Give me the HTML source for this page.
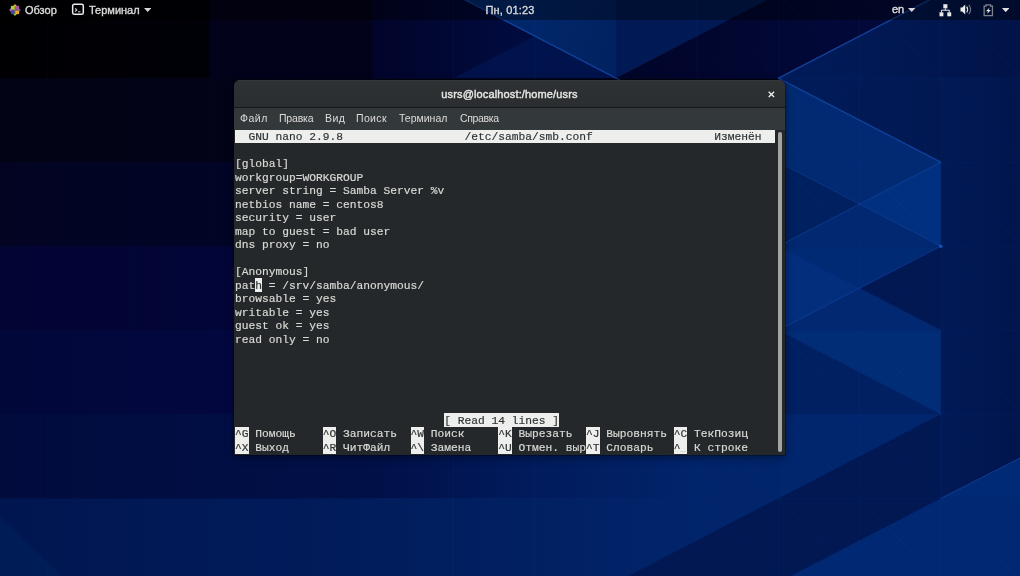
<!DOCTYPE html>
<html><head><meta charset="utf-8"><title>desktop</title>
<style>
html,body{margin:0;padding:0;}
body{width:1020px;height:576px;overflow:hidden;background:#020a3a;position:relative;font-family:"Liberation Sans",sans-serif;}
.wall{position:absolute;left:0;top:0;}
.topbar{position:absolute;left:0;top:0;width:1020px;height:20px;background:rgba(0,0,0,0.38);}
.tb{will-change:transform;position:absolute;top:0;height:20px;line-height:20px;color:#dadada;font-size:11px;font-weight:normal;-webkit-text-stroke:0.35px #dadada;white-space:nowrap;}
.win{position:absolute;left:234px;top:80px;width:551px;height:374.5px;background:#25282a;border-radius:6px 6px 0 0;box-shadow:0 2px 8px rgba(0,0,0,0.45),0 0 0 1px rgba(0,0,0,0.25);overflow:hidden;}
.title{position:absolute;left:0;top:0;width:551px;height:27px;background:linear-gradient(#30343688,#2b2e30);background-color:#2c2f31;border-bottom:1px solid #151718;box-shadow:inset 0 1px 0 rgba(255,255,255,0.035);}
.title .t{will-change:transform;position:absolute;left:0;width:551px;top:0;height:27px;line-height:28px;text-align:center;color:#e6e6e4;font-size:11px;font-weight:normal;-webkit-text-stroke:0.4px #e6e6e4;letter-spacing:0.14px;}
.menu{position:absolute;left:0;top:28px;width:551px;height:22px;background:#33383a;}
.menu span{will-change:transform;position:absolute;top:0;height:22px;line-height:21px;color:#dcdcda;font-size:10.5px;white-space:nowrap;}
.term{position:absolute;left:1px;top:49.75px;width:540px;height:324px;font-family:"Liberation Mono",monospace;font-size:11.25px;color:#d8dad5;-webkit-text-stroke:0.18px currentColor;}
.r{position:absolute;height:13.5px;line-height:13.5px;white-space:pre;}
.r.i{color:#2e3436;}
.r.u{color:#c9c9c6;}
.b{position:absolute;height:13.5px;background:#eeeeec;}
.tx{position:absolute;left:0;top:0;width:540px;height:324px;will-change:transform;}
.ga{will-change:transform;}
.sb{position:absolute;left:544.2px;top:51.8px;width:3.8px;height:320.2px;background:#a4a5a3;border-radius:2px;}
</style></head><body>
<svg class="wall" width="1020" height="576" viewBox="0 0 1020 576">
<defs><linearGradient id="g0" gradientUnits="userSpaceOnUse" x1="0" y1="0" x2="560" y2="0"><stop offset="0" stop-color="#000003"/><stop offset="1" stop-color="#010110"/></linearGradient><linearGradient id="g1" gradientUnits="userSpaceOnUse" x1="0" y1="0" x2="560" y2="0"><stop offset="0" stop-color="#020314"/><stop offset="1" stop-color="#02041c"/></linearGradient><linearGradient id="g2" gradientUnits="userSpaceOnUse" x1="0" y1="0" x2="560" y2="0"><stop offset="0" stop-color="#020422"/><stop offset="1" stop-color="#02052c"/></linearGradient><linearGradient id="g3" gradientUnits="userSpaceOnUse" x1="0" y1="0" x2="560" y2="0"><stop offset="0" stop-color="#020434"/><stop offset="1" stop-color="#02063c"/></linearGradient><linearGradient id="g4" gradientUnits="userSpaceOnUse" x1="0" y1="0" x2="560" y2="0"><stop offset="0" stop-color="#02073a"/><stop offset="1" stop-color="#020a46"/></linearGradient><linearGradient id="g5" gradientUnits="userSpaceOnUse" x1="0" y1="0" x2="560" y2="0"><stop offset="0" stop-color="#010b3c"/><stop offset="1" stop-color="#011350"/></linearGradient><linearGradient id="g6" gradientUnits="userSpaceOnUse" x1="0" y1="0" x2="560" y2="0"><stop offset="0" stop-color="#011650"/><stop offset="1" stop-color="#012064"/></linearGradient><linearGradient id="g7" gradientUnits="userSpaceOnUse" x1="372.4" y1="0" x2="616.0" y2="0"><stop offset="0" stop-color="#02042a"/><stop offset="0.6" stop-color="#010b3e"/><stop offset="1" stop-color="#01104a"/></linearGradient><linearGradient id="g8" gradientUnits="userSpaceOnUse" x1="453.59999999999997" y1="-5.950000000000003" x2="616.0" y2="30"><stop offset="0" stop-color="#022d74"/><stop offset="0.5" stop-color="#01276a"/><stop offset="1" stop-color="#012260"/></linearGradient><linearGradient id="g9" gradientUnits="userSpaceOnUse" x1="640" y1="0" x2="900" y2="0"><stop offset="0" stop-color="#02052a"/><stop offset="1" stop-color="#020a3c"/></linearGradient><linearGradient id="g10" gradientUnits="userSpaceOnUse" x1="820" y1="0" x2="1020" y2="0"><stop offset="0" stop-color="#011b58"/><stop offset="1" stop-color="#011348"/></linearGradient><linearGradient id="g11" gradientUnits="userSpaceOnUse" x1="210.0" y1="0" x2="697.1999999999999" y2="0"><stop offset="0" stop-color="#010e44"/><stop offset="0.35" stop-color="#011048"/><stop offset="0.62" stop-color="#011a5a"/><stop offset="1" stop-color="#01246a"/></linearGradient><linearGradient id="g12" gradientUnits="userSpaceOnUse" x1="291.19999999999993" y1="0" x2="697.1999999999999" y2="0"><stop offset="0" stop-color="#011b58"/><stop offset="1" stop-color="#01246a"/></linearGradient><linearGradient id="g13" gradientUnits="userSpaceOnUse" x1="940.8" y1="0" x2="1020" y2="0"><stop offset="0" stop-color="#011a56"/><stop offset="1" stop-color="#01154c"/></linearGradient><linearGradient id="g14" gradientUnits="userSpaceOnUse" x1="778.4" y1="78.1" x2="940.8" y2="78.1"><stop offset="0" stop-color="#011c5a"/><stop offset="1" stop-color="#011852"/></linearGradient></defs>
<polygon points="0.0,-6.0 1020.0,-6.0 1020.0,78.4 0.0,78.4" fill="url(#g0)"/>
<polygon points="0.0,78.1 1020.0,78.1 1020.0,162.4 0.0,162.4" fill="url(#g1)"/>
<polygon points="0.0,162.1 1020.0,162.1 1020.0,246.5 0.0,246.5" fill="url(#g2)"/>
<polygon points="0.0,246.2 1020.0,246.2 1020.0,330.6 0.0,330.6" fill="url(#g3)"/>
<polygon points="0.0,330.2 1020.0,330.2 1020.0,414.6 0.0,414.6" fill="url(#g4)"/>
<polygon points="0.0,414.3 1020.0,414.3 1020.0,498.7 0.0,498.7" fill="url(#g5)"/>
<polygon points="0.0,498.4 1020.0,498.4 1020.0,582.7 0.0,582.7" fill="url(#g6)"/>
<polygon points="210.0,-6.0 372.4,-6.0 372.4,78.1 210.0,78.1" fill="#02021a"/>
<polygon points="372.4,-6.0 616.0,-6.0 616.0,78.1 372.4,78.1" fill="url(#g7)"/>
<polygon points="453.6,78.1 534.8,36.1 616.0,78.1" fill="#01144e" fill-opacity="0.9"/>
<polygon points="453.6,-6.0 616.0,78.1 616.0,-6.0" fill="url(#g8)"/>
<polygon points="616.0,-6.0 616.0,78.1 778.4,-6.0" fill="#011a56"/>
<polygon points="616.0,78.1 778.4,78.1 940.8,-6.0 778.4,-6.0" fill="url(#g9)"/>
<polygon points="778.4,78.1 940.8,-6.0 1020.0,-6.0 1020.0,78.1" fill="url(#g10)"/>
<polygon points="210.0,414.3 778.4,414.3 778.4,498.4 210.0,498.4" fill="url(#g11)"/>
<polygon points="291.2,498.4 778.4,498.4 778.4,582.4 291.2,582.4" fill="url(#g12)"/>
<polygon points="0.0,516.4 0.0,576.0 62.0,576.0" fill="#012a66" fill-opacity="0.3"/>
<polygon points="940.8,78.1 1020.0,78.1 1020.0,498.4 940.8,498.4" fill="url(#g13)"/>
<polygon points="778.4,78.1 940.8,78.1 940.8,162.1" fill="url(#g14)"/>
<polygon points="778.4,78.1 940.8,162.1 778.4,162.1" fill="#012a72"/>
<polygon points="778.4,162.1 940.8,162.1 859.6,204.2" fill="#012a72"/>
<polygon points="778.4,162.1 778.4,246.2 859.6,204.2" fill="#012060"/>
<polygon points="940.8,162.1 940.8,246.2 859.6,204.2" fill="#023080"/>
<polygon points="778.4,246.2 940.8,246.2 859.6,204.2" fill="#012870"/>
<polygon points="778.4,246.2 940.8,246.2 859.6,288.2" fill="#012a74"/>
<polygon points="778.4,246.2 778.4,330.2 859.6,288.2" fill="#022e7c"/>
<polygon points="940.8,246.2 940.8,330.2 859.6,288.2" fill="#011852"/>
<polygon points="778.4,330.2 940.8,330.2 859.6,288.2" fill="#012870"/>
<polygon points="778.4,330.2 940.8,330.2 940.8,414.3" fill="#012c76"/>
<polygon points="778.4,330.2 940.8,414.3 778.4,414.3" fill="#012062"/>
<polygon points="778.4,414.3 940.8,414.3 940.8,498.4 778.4,498.4" fill="#01266e"/>
<polygon points="616.0,582.4 778.4,498.4 940.8,414.3 940.8,498.4 778.4,582.4" fill="#011852"/>
<polygon points="940.8,498.4 778.4,582.4 1020.0,582.4 1020.0,498.4" fill="#012872"/>
<polygon points="940.8,498.4 1020.0,458.0 1020.0,498.4" fill="#012a76"/>
<line x1="47.6" y1="0.0" x2="47.6" y2="576.0" stroke="#2a6ad8" stroke-opacity="0.05" stroke-width="0.7"/>
<line x1="128.8" y1="0.0" x2="128.8" y2="576.0" stroke="#2a6ad8" stroke-opacity="0.05" stroke-width="0.7"/>
<line x1="210.0" y1="0.0" x2="210.0" y2="576.0" stroke="#2a6ad8" stroke-opacity="0.05" stroke-width="0.7"/>
<line x1="291.2" y1="0.0" x2="291.2" y2="576.0" stroke="#2a6ad8" stroke-opacity="0.05" stroke-width="0.7"/>
<line x1="372.4" y1="0.0" x2="372.4" y2="576.0" stroke="#2a6ad8" stroke-opacity="0.05" stroke-width="0.7"/>
<line x1="453.6" y1="0.0" x2="453.6" y2="576.0" stroke="#2a6ad8" stroke-opacity="0.1" stroke-width="0.7"/>
<line x1="534.8" y1="0.0" x2="534.8" y2="576.0" stroke="#2a6ad8" stroke-opacity="0.1" stroke-width="0.7"/>
<line x1="616.0" y1="0.0" x2="616.0" y2="576.0" stroke="#2a6ad8" stroke-opacity="0.1" stroke-width="0.7"/>
<line x1="697.2" y1="0.0" x2="697.2" y2="576.0" stroke="#2a6ad8" stroke-opacity="0.1" stroke-width="0.7"/>
<line x1="778.4" y1="0.0" x2="778.4" y2="576.0" stroke="#2a6ad8" stroke-opacity="0.1" stroke-width="0.7"/>
<line x1="859.6" y1="0.0" x2="859.6" y2="576.0" stroke="#2a6ad8" stroke-opacity="0.1" stroke-width="0.7"/>
<line x1="940.8" y1="0.0" x2="940.8" y2="576.0" stroke="#2a6ad8" stroke-opacity="0.1" stroke-width="0.7"/>
<line x1="1022.0" y1="0.0" x2="1022.0" y2="576.0" stroke="#2a6ad8" stroke-opacity="0.1" stroke-width="0.7"/>
<line x1="372.4" y1="78.1" x2="1020.0" y2="78.1" stroke="#2a6ad8" stroke-opacity="0.1" stroke-width="0.7"/>
<line x1="372.4" y1="162.1" x2="1020.0" y2="162.1" stroke="#2a6ad8" stroke-opacity="0.1" stroke-width="0.7"/>
<line x1="372.4" y1="246.2" x2="1020.0" y2="246.2" stroke="#2a6ad8" stroke-opacity="0.1" stroke-width="0.7"/>
<line x1="372.4" y1="330.2" x2="1020.0" y2="330.2" stroke="#2a6ad8" stroke-opacity="0.1" stroke-width="0.7"/>
<line x1="372.4" y1="414.3" x2="1020.0" y2="414.3" stroke="#2a6ad8" stroke-opacity="0.1" stroke-width="0.7"/>
<line x1="372.4" y1="498.4" x2="1020.0" y2="498.4" stroke="#2a6ad8" stroke-opacity="0.1" stroke-width="0.7"/>
<line x1="372.4" y1="582.4" x2="1020.0" y2="582.4" stroke="#2a6ad8" stroke-opacity="0.1" stroke-width="0.7"/>
<line x1="697.2" y1="-6.0" x2="778.4" y2="78.1" stroke="#2a6ad8" stroke-opacity="0.09" stroke-width="0.7"/>
<line x1="778.4" y1="-6.0" x2="697.2" y2="78.1" stroke="#2a6ad8" stroke-opacity="0.06" stroke-width="0.7"/>
<line x1="778.4" y1="-6.0" x2="859.6" y2="78.1" stroke="#2a6ad8" stroke-opacity="0.09" stroke-width="0.7"/>
<line x1="859.6" y1="-6.0" x2="778.4" y2="78.1" stroke="#2a6ad8" stroke-opacity="0.06" stroke-width="0.7"/>
<line x1="859.6" y1="-6.0" x2="940.8" y2="78.1" stroke="#2a6ad8" stroke-opacity="0.09" stroke-width="0.7"/>
<line x1="940.8" y1="-6.0" x2="859.6" y2="78.1" stroke="#2a6ad8" stroke-opacity="0.06" stroke-width="0.7"/>
<line x1="940.8" y1="-6.0" x2="1022.0" y2="78.1" stroke="#2a6ad8" stroke-opacity="0.09" stroke-width="0.7"/>
<line x1="1022.0" y1="-6.0" x2="940.8" y2="78.1" stroke="#2a6ad8" stroke-opacity="0.06" stroke-width="0.7"/>
<line x1="697.2" y1="78.1" x2="778.4" y2="162.1" stroke="#2a6ad8" stroke-opacity="0.09" stroke-width="0.7"/>
<line x1="778.4" y1="78.1" x2="697.2" y2="162.1" stroke="#2a6ad8" stroke-opacity="0.06" stroke-width="0.7"/>
<line x1="778.4" y1="78.1" x2="859.6" y2="162.1" stroke="#2a6ad8" stroke-opacity="0.09" stroke-width="0.7"/>
<line x1="859.6" y1="78.1" x2="778.4" y2="162.1" stroke="#2a6ad8" stroke-opacity="0.06" stroke-width="0.7"/>
<line x1="859.6" y1="78.1" x2="940.8" y2="162.1" stroke="#2a6ad8" stroke-opacity="0.09" stroke-width="0.7"/>
<line x1="940.8" y1="78.1" x2="859.6" y2="162.1" stroke="#2a6ad8" stroke-opacity="0.06" stroke-width="0.7"/>
<line x1="940.8" y1="78.1" x2="1022.0" y2="162.1" stroke="#2a6ad8" stroke-opacity="0.09" stroke-width="0.7"/>
<line x1="1022.0" y1="78.1" x2="940.8" y2="162.1" stroke="#2a6ad8" stroke-opacity="0.06" stroke-width="0.7"/>
<line x1="697.2" y1="162.1" x2="778.4" y2="246.2" stroke="#2a6ad8" stroke-opacity="0.09" stroke-width="0.7"/>
<line x1="778.4" y1="162.1" x2="697.2" y2="246.2" stroke="#2a6ad8" stroke-opacity="0.06" stroke-width="0.7"/>
<line x1="778.4" y1="162.1" x2="859.6" y2="246.2" stroke="#2a6ad8" stroke-opacity="0.09" stroke-width="0.7"/>
<line x1="859.6" y1="162.1" x2="778.4" y2="246.2" stroke="#2a6ad8" stroke-opacity="0.06" stroke-width="0.7"/>
<line x1="859.6" y1="162.1" x2="940.8" y2="246.2" stroke="#2a6ad8" stroke-opacity="0.09" stroke-width="0.7"/>
<line x1="940.8" y1="162.1" x2="859.6" y2="246.2" stroke="#2a6ad8" stroke-opacity="0.06" stroke-width="0.7"/>
<line x1="940.8" y1="162.1" x2="1022.0" y2="246.2" stroke="#2a6ad8" stroke-opacity="0.09" stroke-width="0.7"/>
<line x1="1022.0" y1="162.1" x2="940.8" y2="246.2" stroke="#2a6ad8" stroke-opacity="0.06" stroke-width="0.7"/>
<line x1="697.2" y1="246.2" x2="778.4" y2="330.2" stroke="#2a6ad8" stroke-opacity="0.09" stroke-width="0.7"/>
<line x1="778.4" y1="246.2" x2="697.2" y2="330.2" stroke="#2a6ad8" stroke-opacity="0.06" stroke-width="0.7"/>
<line x1="778.4" y1="246.2" x2="859.6" y2="330.2" stroke="#2a6ad8" stroke-opacity="0.09" stroke-width="0.7"/>
<line x1="859.6" y1="246.2" x2="778.4" y2="330.2" stroke="#2a6ad8" stroke-opacity="0.06" stroke-width="0.7"/>
<line x1="859.6" y1="246.2" x2="940.8" y2="330.2" stroke="#2a6ad8" stroke-opacity="0.09" stroke-width="0.7"/>
<line x1="940.8" y1="246.2" x2="859.6" y2="330.2" stroke="#2a6ad8" stroke-opacity="0.06" stroke-width="0.7"/>
<line x1="940.8" y1="246.2" x2="1022.0" y2="330.2" stroke="#2a6ad8" stroke-opacity="0.09" stroke-width="0.7"/>
<line x1="1022.0" y1="246.2" x2="940.8" y2="330.2" stroke="#2a6ad8" stroke-opacity="0.06" stroke-width="0.7"/>
<line x1="697.2" y1="330.2" x2="778.4" y2="414.3" stroke="#2a6ad8" stroke-opacity="0.09" stroke-width="0.7"/>
<line x1="778.4" y1="330.2" x2="697.2" y2="414.3" stroke="#2a6ad8" stroke-opacity="0.06" stroke-width="0.7"/>
<line x1="778.4" y1="330.2" x2="859.6" y2="414.3" stroke="#2a6ad8" stroke-opacity="0.09" stroke-width="0.7"/>
<line x1="859.6" y1="330.2" x2="778.4" y2="414.3" stroke="#2a6ad8" stroke-opacity="0.06" stroke-width="0.7"/>
<line x1="859.6" y1="330.2" x2="940.8" y2="414.3" stroke="#2a6ad8" stroke-opacity="0.09" stroke-width="0.7"/>
<line x1="940.8" y1="330.2" x2="859.6" y2="414.3" stroke="#2a6ad8" stroke-opacity="0.06" stroke-width="0.7"/>
<line x1="940.8" y1="330.2" x2="1022.0" y2="414.3" stroke="#2a6ad8" stroke-opacity="0.09" stroke-width="0.7"/>
<line x1="1022.0" y1="330.2" x2="940.8" y2="414.3" stroke="#2a6ad8" stroke-opacity="0.06" stroke-width="0.7"/>
<line x1="697.2" y1="414.3" x2="778.4" y2="498.4" stroke="#2a6ad8" stroke-opacity="0.09" stroke-width="0.7"/>
<line x1="778.4" y1="414.3" x2="697.2" y2="498.4" stroke="#2a6ad8" stroke-opacity="0.06" stroke-width="0.7"/>
<line x1="778.4" y1="414.3" x2="859.6" y2="498.4" stroke="#2a6ad8" stroke-opacity="0.09" stroke-width="0.7"/>
<line x1="859.6" y1="414.3" x2="778.4" y2="498.4" stroke="#2a6ad8" stroke-opacity="0.06" stroke-width="0.7"/>
<line x1="859.6" y1="414.3" x2="940.8" y2="498.4" stroke="#2a6ad8" stroke-opacity="0.09" stroke-width="0.7"/>
<line x1="940.8" y1="414.3" x2="859.6" y2="498.4" stroke="#2a6ad8" stroke-opacity="0.06" stroke-width="0.7"/>
<line x1="940.8" y1="414.3" x2="1022.0" y2="498.4" stroke="#2a6ad8" stroke-opacity="0.09" stroke-width="0.7"/>
<line x1="1022.0" y1="414.3" x2="940.8" y2="498.4" stroke="#2a6ad8" stroke-opacity="0.06" stroke-width="0.7"/>
<line x1="697.2" y1="498.4" x2="778.4" y2="582.4" stroke="#2a6ad8" stroke-opacity="0.09" stroke-width="0.7"/>
<line x1="778.4" y1="498.4" x2="697.2" y2="582.4" stroke="#2a6ad8" stroke-opacity="0.06" stroke-width="0.7"/>
<line x1="778.4" y1="498.4" x2="859.6" y2="582.4" stroke="#2a6ad8" stroke-opacity="0.09" stroke-width="0.7"/>
<line x1="859.6" y1="498.4" x2="778.4" y2="582.4" stroke="#2a6ad8" stroke-opacity="0.06" stroke-width="0.7"/>
<line x1="859.6" y1="498.4" x2="940.8" y2="582.4" stroke="#2a6ad8" stroke-opacity="0.09" stroke-width="0.7"/>
<line x1="940.8" y1="498.4" x2="859.6" y2="582.4" stroke="#2a6ad8" stroke-opacity="0.06" stroke-width="0.7"/>
<line x1="940.8" y1="498.4" x2="1022.0" y2="582.4" stroke="#2a6ad8" stroke-opacity="0.09" stroke-width="0.7"/>
<line x1="1022.0" y1="498.4" x2="940.8" y2="582.4" stroke="#2a6ad8" stroke-opacity="0.06" stroke-width="0.7"/>
<line x1="453.6" y1="-6.0" x2="778.4" y2="162.1" stroke="#2468e0" stroke-opacity="0.5" stroke-width="1.3"/>
<line x1="778.4" y1="162.1" x2="940.8" y2="246.2" stroke="#2468e0" stroke-opacity="0.35" stroke-width="0.9"/>
<line x1="778.4" y1="78.1" x2="940.8" y2="-6.0" stroke="#2468e0" stroke-opacity="0.55" stroke-width="1.3"/>
<line x1="778.4" y1="78.1" x2="940.8" y2="162.1" stroke="#2468e0" stroke-opacity="0.45" stroke-width="1.3"/>
<line x1="940.8" y1="162.1" x2="778.4" y2="246.2" stroke="#2468e0" stroke-opacity="0.4" stroke-width="0.9"/>
<line x1="940.8" y1="246.2" x2="778.4" y2="330.2" stroke="#2468e0" stroke-opacity="0.4" stroke-width="0.9"/>
<line x1="778.4" y1="246.2" x2="940.8" y2="330.2" stroke="#2468e0" stroke-opacity="0.15" stroke-width="0.8"/>
<line x1="778.4" y1="330.2" x2="940.8" y2="414.3" stroke="#2468e0" stroke-opacity="0.15" stroke-width="0.8"/>
<line x1="940.8" y1="498.4" x2="1020.0" y2="458.0" stroke="#2468e0" stroke-opacity="0.45" stroke-width="0.9"/>
<line x1="616.0" y1="78.1" x2="778.4" y2="-6.0" stroke="#2468e0" stroke-opacity="0.12" stroke-width="0.8"/>
<circle cx="940.8" cy="246.2" r="1.8" fill="#1c5ac8" fill-opacity="0.8"/>
</svg>
<div class="topbar"></div>
<!-- topbar items -->
<svg style="position:absolute;left:8.6px;top:4.1px" width="12" height="12" viewBox="0 0 12 12">
 <polygon points="6,0.1 8.4,2.6 3.6,2.6" fill="#efa724"/><polygon points="11.9,6 9.4,3.6 9.4,8.4" fill="#5a5cae"/>
 <polygon points="6,11.9 3.6,9.4 8.4,9.4" fill="#9ccd2a"/><polygon points="0.1,6 2.6,3.6 2.6,8.4" fill="#b86fb4"/>
 <rect x="1.9" y="1.9" width="3.9" height="3.9" fill="#a3d444"/><rect x="6.2" y="1.9" width="3.9" height="3.9" fill="#ae55a6"/>
 <rect x="1.9" y="6.2" width="3.9" height="3.9" fill="#4646a4"/><rect x="6.2" y="6.2" width="3.9" height="3.9" fill="#efa72c"/>
 <rect x="5.7" y="1" width="0.6" height="5" fill="#efa724"/><rect x="5.7" y="6" width="0.6" height="5" fill="#9ccd2a"/>
 <rect x="1" y="5.7" width="5" height="0.6" fill="#b86fb4"/><rect x="6" y="5.7" width="5" height="0.6" fill="#5a5cae"/>
</svg>
<div class="tb" style="left:25px">Обзор</div>
<svg style="position:absolute;left:71px;top:3px" width="14" height="13" viewBox="0 0 14 13">
 <rect x="1.65" y="1.25" width="10.65" height="10.1" rx="1.7" fill="none" stroke="#ececec" stroke-width="1.5"/>
 <path d="M4.2 5.3 L5.8 7 L4.2 8.7" fill="none" stroke="#dcdcdc" stroke-width="1.1"/><path d="M7 8.8 H9.4" stroke="#dcdcdc" stroke-width="1"/>
</svg>
<div class="tb" style="left:89px">Терминал</div>
<svg style="position:absolute;left:143.5px;top:8px" width="7.4" height="4"><polygon points="0,0 7.4,0 3.7,4" fill="#d6d6d6"/></svg>
<div class="tb" style="left:410.2px;width:200px;text-align:center;letter-spacing:0.15px">Пн, 01:23</div>
<div class="tb" style="left:892.2px;font-size:11px;-webkit-text-stroke:0.45px #dadada;line-height:19px">en</div>
<svg style="position:absolute;left:908.3px;top:8px" width="7.4" height="4"><polygon points="0,0 7.4,0 3.7,4" fill="#d6d6d6"/></svg>
<svg style="position:absolute;left:939px;top:4px" width="13" height="13" viewBox="0 0 13 13">
 <rect x="4.3" y="0.2" width="4.1" height="4.1" fill="#e8e8e8"/><rect x="0.5" y="8.3" width="3.9" height="4" fill="#e8e8e8"/><rect x="8.3" y="8.3" width="3.9" height="4" fill="#e8e8e8"/>
 <path d="M6.35 4.3 V6.2 M2.45 8.3 V6.2 H10.25 V8.3" fill="none" stroke="#e8e8e8" stroke-width="1"/>
</svg>
<svg style="position:absolute;left:960px;top:4px" width="13" height="11" viewBox="0 0 13 11">
 <path d="M0.5 3.6 H2.3 L5.2 0.6 V10.4 L2.3 7.4 H0.5 Z" fill="#ececec"/>
 <path d="M6.7 2.6 Q8.6 5.5 6.7 8.4" fill="none" stroke="#e4e4e4" stroke-width="1.15"/>
 <path d="M8.9 0.9 Q12.2 5.5 8.9 10.1" fill="none" stroke="#8f929c" stroke-width="1"/>
</svg>
<svg style="position:absolute;left:982.5px;top:4px" width="11" height="13" viewBox="0 0 11 13">
 <path d="M1.15 2.1 H3 V0.85 H7.6 V2.1 H9.45 V11.7 H1.15 Z" fill="none" stroke="#7f828c" stroke-width="1.3"/>
 <path d="M6.6 3.4 L2.9 7.2 H5.2 L4.1 9.9 L7.8 6 H5.5 Z" fill="#ececec"/>
</svg>
<svg style="position:absolute;left:1001.5px;top:8.1px" width="7.4" height="4.2"><polygon points="0,0 7.4,0 3.7,4.2" fill="#e0e0e0"/></svg>

<div class="win">
 <div class="title"><div class="t">usrs@localhost:/home/usrs</div>
  <svg style="position:absolute;left:533.6px;top:10.6px" width="7" height="7" viewBox="0 0 7 7"><path d="M0.7 0.7 L6.1 6.1 M6.1 0.7 L0.7 6.1" stroke="#eeeeec" stroke-width="1.35"/></svg>
 </div>
 <div class="menu"><span style="left:5.9px;letter-spacing:0.5px">Файл</span><span style="left:44.9px;letter-spacing:-0.2px">Правка</span><span style="left:90.7px;letter-spacing:0.45px">Вид</span><span style="left:121.8px;letter-spacing:0.35px">Поиск</span><span style="left:164.8px">Терминал</span><span style="left:225.5px;letter-spacing:-0.37px">Справка</span></div>
 <div class="term">
<div class="b" style="left:20.25px;top:148.50px;width:6.75px"></div>
<div class="b" style="left:0.00px;top:0.00px;width:540.00px"></div>
<div class="b" style="left:209.25px;top:283.50px;width:114.75px"></div>
<div class="b" style="left:0.00px;top:297.00px;width:13.50px"></div>
<div class="b" style="left:87.75px;top:297.00px;width:13.50px"></div>
<div class="b" style="left:175.50px;top:297.00px;width:13.50px"></div>
<div class="b" style="left:263.25px;top:297.00px;width:13.50px"></div>
<div class="b" style="left:351.00px;top:297.00px;width:13.50px"></div>
<div class="b" style="left:438.75px;top:297.00px;width:13.50px"></div>
<div class="b" style="left:0.00px;top:310.50px;width:13.50px"></div>
<div class="b" style="left:87.75px;top:310.50px;width:13.50px"></div>
<div class="b" style="left:175.50px;top:310.50px;width:13.50px"></div>
<div class="b" style="left:263.25px;top:310.50px;width:13.50px"></div>
<div class="b" style="left:351.00px;top:310.50px;width:13.50px"></div>
<div class="b" style="left:438.75px;top:310.50px;width:13.50px"></div>
<div class="tx">
<div class="r i" style="left:13.50px;top:1.00px">GNU nano 2.9.8</div>
<div class="r i" style="left:229.50px;top:1.00px">/etc/samba/smb.conf</div>
<div class="r i" style="left:479.25px;top:1.00px">Изменён</div>
<div class="r " style="left:0.00px;top:28.00px">[global]</div>
<div class="r " style="left:0.00px;top:41.50px">workgroup=WORKGROUP</div>
<div class="r " style="left:0.00px;top:55.00px">server string = Samba Server %v</div>
<div class="r " style="left:0.00px;top:68.50px">netbios name = centos8</div>
<div class="r " style="left:0.00px;top:82.00px">security = user</div>
<div class="r " style="left:0.00px;top:95.50px">map to guest = bad user</div>
<div class="r " style="left:0.00px;top:109.00px">dns proxy = no</div>
<div class="r " style="left:0.00px;top:136.00px">[Anonymous]</div>
<div class="r " style="left:0.00px;top:149.50px">pat</div>
<div class="r i" style="left:20.25px;top:149.50px">h</div>
<div class="r " style="left:27.00px;top:149.50px"> = /srv/samba/anonymous/</div>
<div class="r " style="left:0.00px;top:163.00px">browsable = yes</div>
<div class="r " style="left:0.00px;top:176.50px">writable = yes</div>
<div class="r " style="left:0.00px;top:190.00px">guest ok = yes</div>
<div class="r " style="left:0.00px;top:203.50px">read only = no</div>
<div class="r i" style="left:209.25px;top:284.50px">[ Read 14 lines ]</div>
<div class="r i" style="left:0.00px;top:298.00px">^G</div>
<div class="r " style="left:20.25px;top:298.00px">Помощь</div>
<div class="r i" style="left:87.75px;top:298.00px">^O</div>
<div class="r " style="left:108.00px;top:298.00px">Записать</div>
<div class="r i" style="left:175.50px;top:298.00px">^W</div>
<div class="r " style="left:195.75px;top:298.00px">Поиск</div>
<div class="r i" style="left:263.25px;top:298.00px">^K</div>
<div class="r " style="left:283.50px;top:298.00px">Вырезать</div>
<div class="r i" style="left:351.00px;top:298.00px">^J</div>
<div class="r " style="left:371.25px;top:298.00px">Выровнять</div>
<div class="r i" style="left:438.75px;top:298.00px">^C</div>
<div class="r " style="left:459.00px;top:298.00px">ТекПозиц</div>
<div class="r i" style="left:0.00px;top:311.50px">^X</div>
<div class="r " style="left:20.25px;top:311.50px">Выход</div>
<div class="r i" style="left:87.75px;top:311.50px">^R</div>
<div class="r " style="left:108.00px;top:311.50px">ЧитФайл</div>
<div class="r i" style="left:175.50px;top:311.50px">^\</div>
<div class="r " style="left:195.75px;top:311.50px">Замена</div>
<div class="r i" style="left:263.25px;top:311.50px">^U</div>
<div class="r " style="left:283.50px;top:311.50px">Отмен. выр</div>
<div class="r i" style="left:351.00px;top:311.50px">^T</div>
<div class="r " style="left:371.25px;top:311.50px">Словарь</div>
<div class="r i" style="left:438.75px;top:311.50px">^</div>
<div class="r u" style="left:445.50px;top:311.50px">_</div>
<div class="r " style="left:459.00px;top:311.50px">К строке</div>
</div>
 </div>
 <div class="sb"></div>
</div>
</body></html>
